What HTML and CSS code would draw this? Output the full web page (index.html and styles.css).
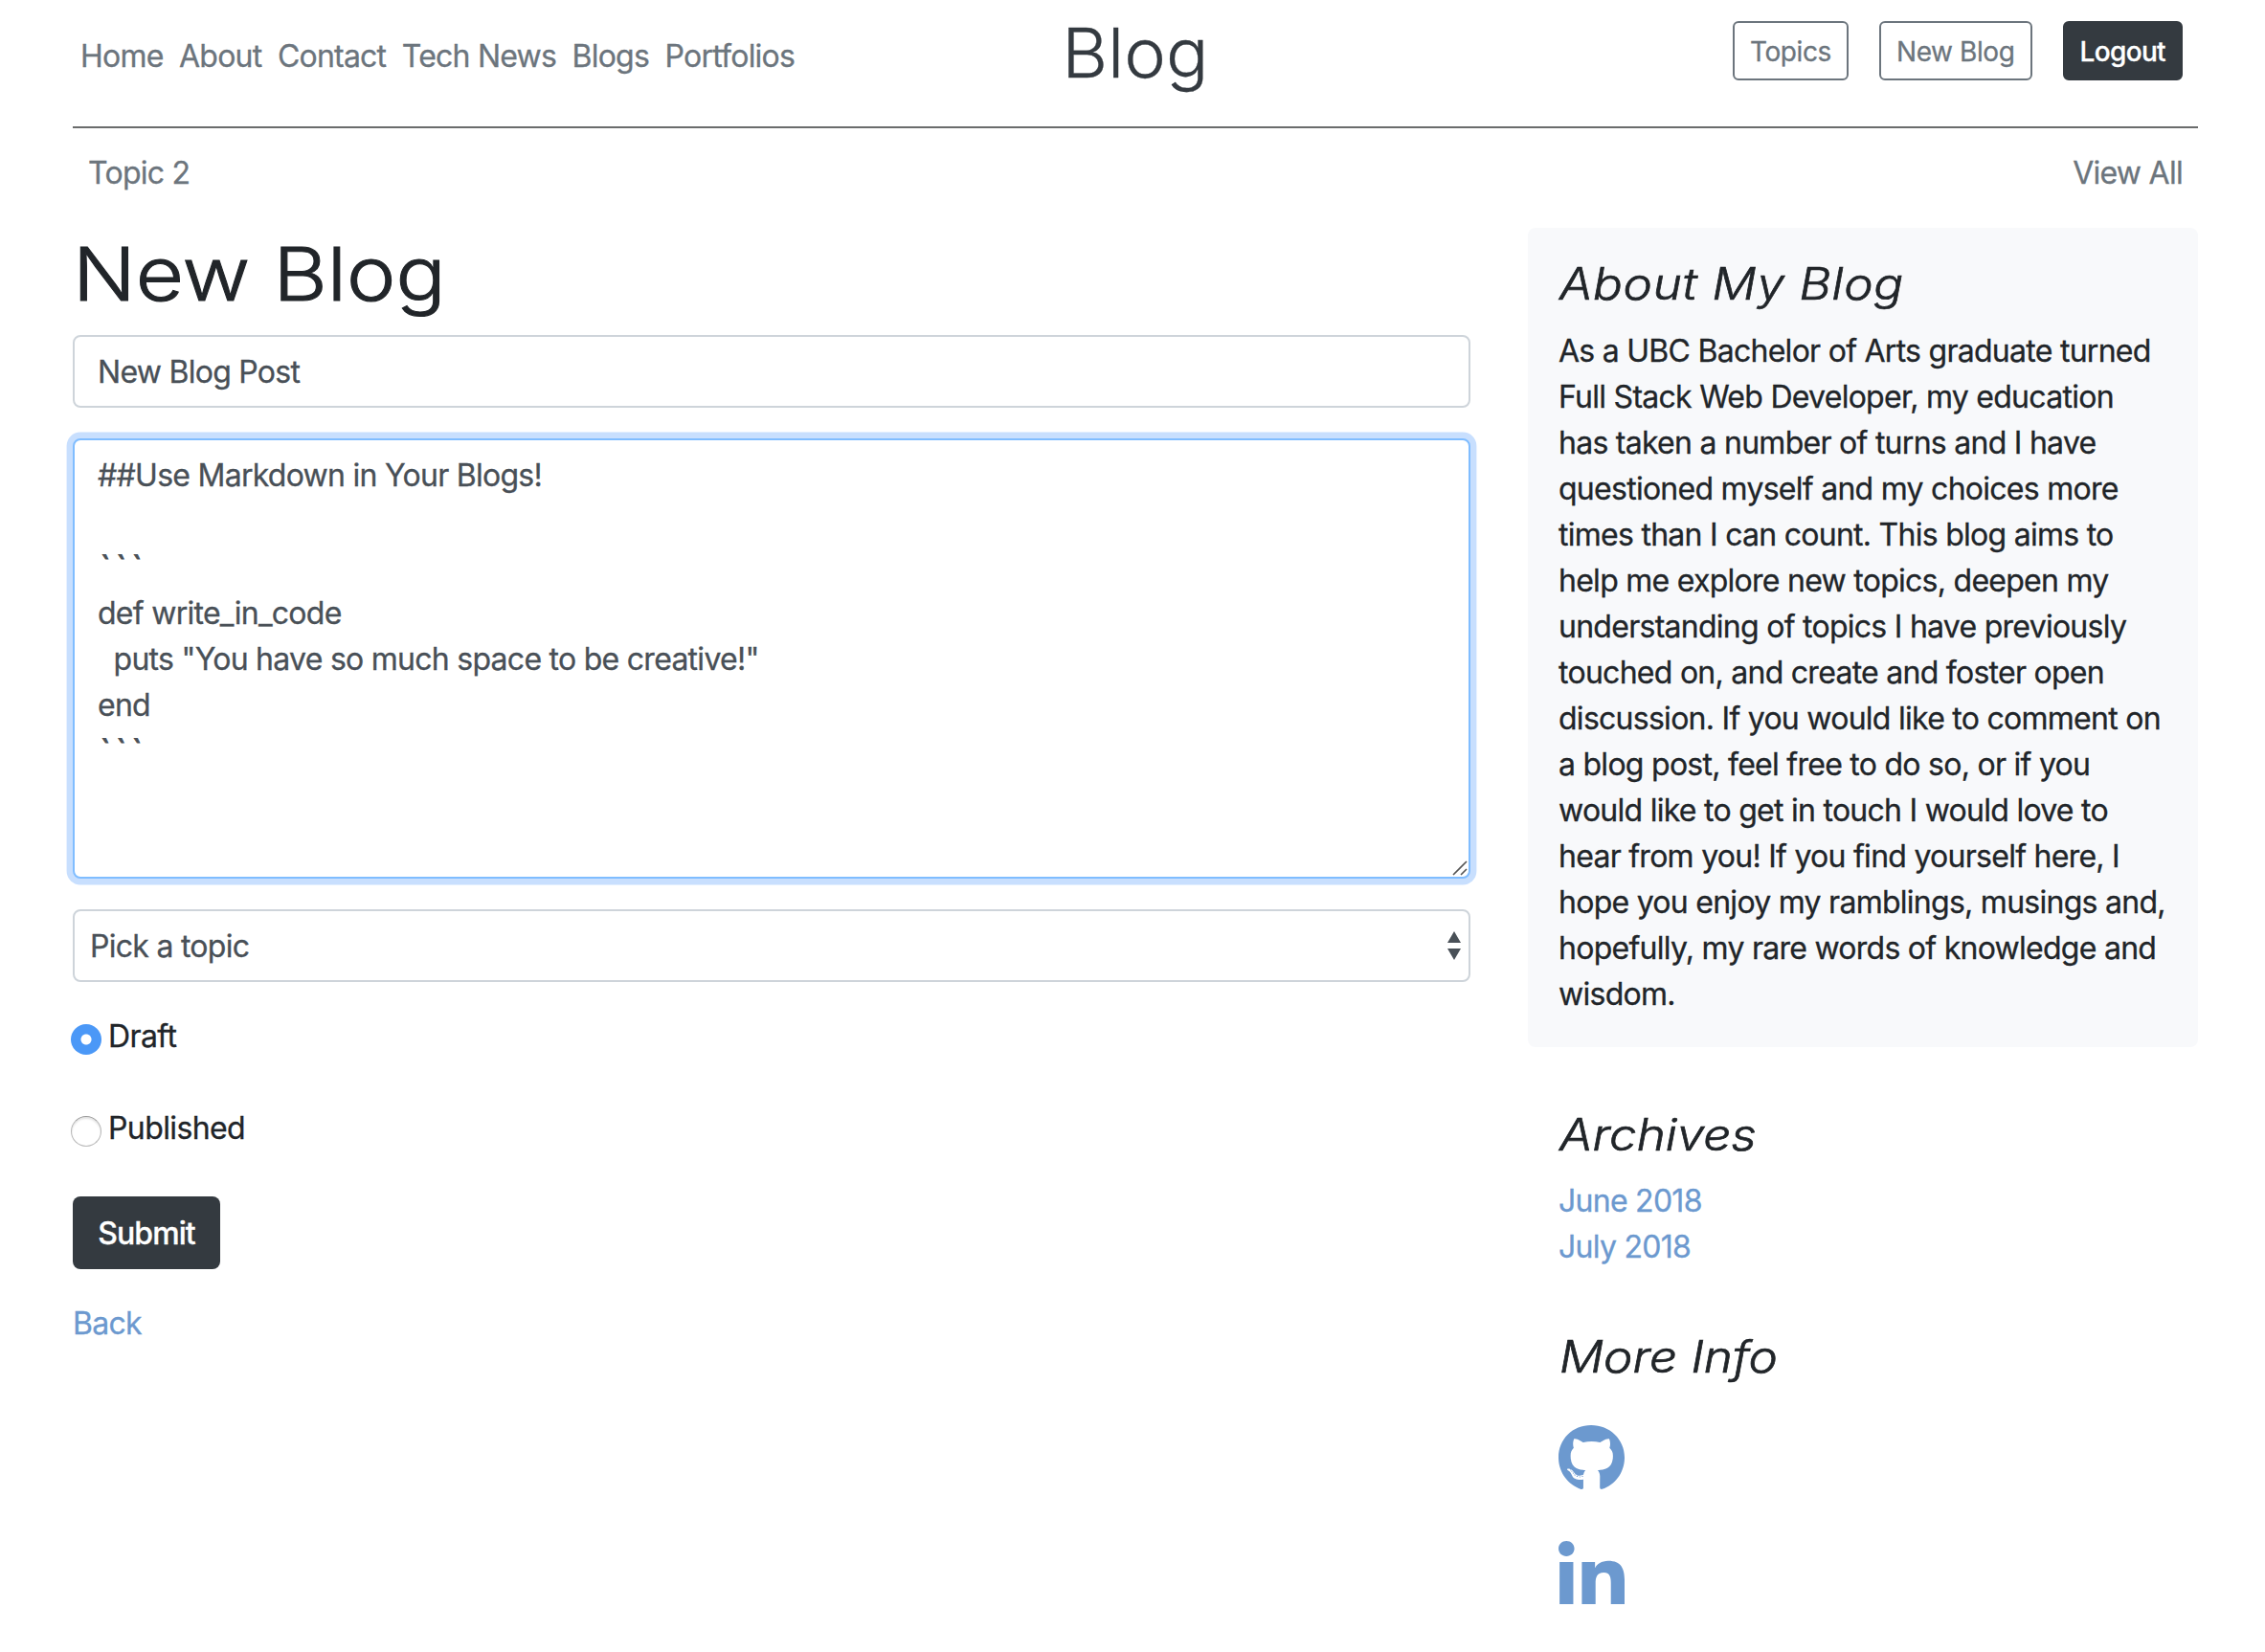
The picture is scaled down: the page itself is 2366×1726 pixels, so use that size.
FILE: index.html
```
<!DOCTYPE html>
<html lang="en">
<head>
<meta charset="utf-8">
<title>New Blog</title>
<link rel="stylesheet" href="styles.css">
</head>
<body>
<div class="container">
  <header class="header">
    <nav class="nav">
      <a href="#">Home</a>
      <a href="#">About</a>
      <a href="#">Contact</a>
      <a href="#">Tech News</a>
      <a href="#">Blogs</a>
      <a href="#">Portfolios</a>
    </nav>
    <a class="brand" href="#">Blog</a>
    <div class="actions">
      <a class="btn-sm" href="#">Topics</a>
      <a class="btn-sm" href="#">New Blog</a>
      <a class="btn-sm btn-sm-dark" href="#">Logout</a>
    </div>
  </header>

  <nav class="topics">
    <a href="#">Topic 2</a>
    <a href="#">View All</a>
  </nav>

  <div class="row">
    <main class="main">
      <h1 class="page-title">New Blog</h1>
      <form class="form">
        <input class="control" type="text" value="New Blog Post">
        <div class="field">
          <div class="control control-area is-focused" role="textbox" aria-multiline="true">##Use Markdown in Your Blogs!

<span class="fence">&#96;&#96;&#96;</span>
def write_in_code
  puts "You have so much space to be creative!"
end
<span class="fence">&#96;&#96;&#96;</span></div>
          <svg class="grip" viewBox="0 0 16 16"><path d="M1 15 15 1M9 15l6-6" fill="none" stroke="#555" stroke-width="1.6"/></svg>
        </div>
        <div class="field">
          <select class="control control-select"><option>Pick a topic</option></select>
          <svg class="caret" viewBox="0 0 14 30"><path d="M7 0l7 12H0zM7 30l7-12H0z" fill="#495057"/></svg>
        </div>
        <div class="radios">
          <label class="radio"><input type="radio" name="status" checked><span>Draft</span></label>
          <label class="radio"><input type="radio" name="status"><span>Published</span></label>
        </div>
        <button class="submit" type="button">Submit</button>
      </form>
      <a class="link" href="#">Back</a>
    </main>

    <aside class="sidebar">
      <section class="about">
        <h4 class="side-title side-title-about">About My Blog</h4>
        <p class="about-text">As a UBC Bachelor of Arts graduate turned<br>Full Stack Web Developer, my education<br>has taken a number of turns and I have<br>questioned myself and my choices more<br>times than I can count. This blog aims to<br>help me explore new topics, deepen my<br>understanding of topics I have previously<br>touched on, and create and foster open<br>discussion. If you would like to comment on<br>a blog post, feel free to do so, or if you<br>would like to get in touch I would love to<br>hear from you! If you find yourself here, I<br>hope you enjoy my ramblings, musings and,<br>hopefully, my rare words of knowledge and<br>wisdom.</p>
      </section>
      <section class="side-section">
        <h4 class="side-title">Archives</h4>
        <ul class="archive">
          <li><a class="link" href="#">June 2018</a></li>
          <li><a class="link" href="#">July 2018</a></li>
        </ul>
      </section>
      <section class="side-section side-section-info">
        <h4 class="side-title">More Info</h4>
        <div class="social">
          <a href="#" aria-label="GitHub"><svg class="github" viewBox="0 8 496 484" preserveAspectRatio="none"><path d="M165.900 397.400c0 2-2.300 3.600-5.200 3.600-3.300.3-5.600-1.300-5.600-3.600 0-2 2.300-3.600 5.200-3.600 3-.3 5.600 1.300 5.600 3.600zm-31.100-4.500c-.7 2 1.300 4.300 4.300 4.900 2.600 1 5.600 0 6.200-2s-1.300-4.300-4.300-5.200c-2.600-.7-5.500.3-6.200 2.300zm44.200-1.700c-2.900.7-4.900 2.600-4.600 4.900.3 2 2.900 3.300 5.900 2.600 2.900-.7 4.900-2.600 4.600-4.600-.3-1.900-3-3.200-5.900-2.900zM244.800 8C106.100 8 0 113.300 0 252c0 110.900 69.800 205.800 169.500 239.200 12.800 2.300 17.300-5.600 17.300-12.100 0-6.200-.3-40.400-.3-61.400 0 0-70 15-84.700-29.800 0 0-11.400-29.100-27.800-36.600 0 0-22.900-15.700 1.600-15.400 0 0 24.900 2 38.600 25.800 21.900 38.600 58.600 27.500 72.900 20.900 2.300-16 8.800-27.100 16-33.700-55.900-6.200-112.300-14.300-112.300-110.500 0-27.500 7.600-41.300 23.600-58.900-2.600-6.500-11.100-33.300 2.600-67.900 20.900-6.500 69 27 69 27 20-5.600 41.500-8.500 62.800-8.500s42.800 2.900 62.800 8.500c0 0 48.100-33.600 69-27 13.700 34.700 5.200 61.400 2.600 67.900 16 17.700 25.800 31.500 25.800 58.900 0 96.500-58.900 104.200-114.800 110.500 9.200 7.900 17 22.900 17 46.400 0 33.700-.3 75.400-.3 83.600 0 6.500 4.600 14.400 17.300 12.100C428.200 457.800 496 362.900 496 252 496 113.300 383.500 8 244.800 8zM97.200 352.900c-1.300 1-1 3.300.7 5.200 1.600 1.600 3.900 2.300 5.200 1 1.300-1 1-3.300-.7-5.200-1.600-1.600-3.900-2.300-5.200-1zm-10.800-8.100c-.7 1.300.3 2.900 2.300 3.900 1.600 1 3.600.7 4.300-.7.7-1.300-.3-2.900-2.300-3.900-2-.6-3.600-.3-4.300.7zm32.400 35.600c-1.600 1.300-1 4.300 1.300 6.200 2.300 2.300 5.200 2.600 6.500 1 1.300-1.300.7-4.300-1.300-6.200-2.200-2.300-5.200-2.600-6.500-1zm-11.400-14.700c-1.600 1-1.600 3.600 0 5.900 1.600 2.300 4.300 3.300 5.600 2.300 1.600-1.300 1.600-3.900 0-6.200-1.400-2.300-4-3.300-5.600-2z"/></svg></a>
          <a href="#" aria-label="LinkedIn"><svg class="linkedin" viewBox="0 32 448 448" preserveAspectRatio="none"><path d="M100.300 480H7.400V180.900h92.900V480zM53.800 140.100C24.100 140.100 0 115.500 0 85.800 0 56.100 24.100 32 53.800 32c29.700 0 53.800 24.100 53.800 53.800 0 29.700-24.100 54.300-53.800 54.300zM448 480h-92.700V334.400c0-34.700-.7-79.200-48.300-79.200-48.300 0-55.700 37.700-55.700 76.700V480h-92.800V180.900h89.100v40.800h1.300c12.400-23.500 42.700-48.300 87.900-48.300 94 0 111.300 61.900 111.300 142.300V480z"/></svg></a>
        </div>
      </section>
    </aside>
  </div>
</div>
</body>
</html>
```
FILE: styles.css
```
* {
  box-sizing: border-box;
}

body {
  margin: 0;
  background: #fff;
  color: #212529;
  font: 32px/48px Inter, "Liberation Sans", sans-serif;
  letter-spacing: -0.73px;
  -webkit-text-stroke: 0.3px;
}

a {
  color: inherit;
  text-decoration: none;
}

.container {
  width: 2220px;
  margin: 0 auto 0 76px;
}

/* Header */

.header {
  display: grid;
  grid-template-columns: 1fr auto 1fr;
  align-items: start;
  height: 134px;
  border-bottom: 2px solid #6a6c6c;
}

.nav {
  display: flex;
  gap: 16.5px;
  padding: 35px 0 0 8px;
  color: #6c757d;
  letter-spacing: -0.78px;
}

.brand {
  padding-top: 12px;
  color: #343a40;
  font-size: 71px;
  font-weight: 300;
  line-height: 86px;
  letter-spacing: 0;
  transform: scaleX(1.038);
}

.actions {
  display: flex;
  justify-content: flex-end;
  gap: 32px;
  padding: 22px 16px 0 0;
}

.btn-sm {
  height: 62px;
  padding: 9px 16px 7px;
  border: 2px solid #6c757d;
  border-radius: 6px;
  color: #6c757d;
  font-size: 28px;
  line-height: 42px;
  letter-spacing: -0.4px;
}

.btn-sm-dark {
  border-color: #343a40;
  background: #343a40;
  color: #fff;
  font-weight: 500;
  letter-spacing: -0.65px;
}

.topics {
  display: flex;
  justify-content: space-between;
  padding: 23px 16px 33px;
  color: #6c757d;
}

/* Columns */

.row {
  display: grid;
  grid-template-columns: 1460px 700px;
  gap: 60px;
  align-items: start;
}

.page-title {
  margin: 0 0 16px;
  font-size: 77px;
  font-weight: 300;
  line-height: 96px;
  letter-spacing: 0;
  transform: scaleX(1.126);
  transform-origin: left;
  -webkit-text-stroke: 1px;
}

/* Form */

.form {
  display: flex;
  flex-direction: column;
  align-items: stretch;
  gap: 32px;
  margin-bottom: 33px;
}

.field {
  position: relative;
  display: flex;
}

.control {
  display: block;
  width: 100%;
  height: 76px;
  margin: 0;
  padding: 12px 24px;
  border: 2px solid #ced4da;
  border-radius: 8px;
  outline: 0;
  background: #fff;
  color: #495057;
  font: inherit;
  letter-spacing: inherit;
}

.control-area {
  height: 460px;
  padding-top: 13px;
  white-space: pre-wrap;
}

.fence {
  padding-left: 3px;
  letter-spacing: 6.2px;
  -webkit-text-stroke: 1px;
}

.is-focused {
  border-color: #80bdff;
  box-shadow: 0 0 0 6.4px #c8dffe;
}

.control-select {
  padding: 13px 16px 11px;
  appearance: none;
}

.grip {
  position: absolute;
  right: 3px;
  bottom: 3px;
  width: 16px;
  height: 16px;
}

.caret {
  position: absolute;
  right: 10px;
  top: 23px;
  width: 14px;
  height: 30px;
}

.radios {
  display: flex;
  flex-direction: column;
  gap: 47px;
  margin-bottom: 16px;
}

.radio {
  display: flex;
  align-items: flex-start;
  gap: 7px;
  margin-left: -2px;
  letter-spacing: -0.6px;
}

.radio span {
  padding-top: 1px;
}

.radio input {
  width: 32px;
  height: 32px;
  margin: 12px 0 0;
  border: 1px solid #b8b8b8;
  border-top-color: #999;
  border-radius: 50%;
  appearance: none;
  background: #fff;
  box-shadow: inset 0 2px 2px #e4e4e4;
}

.radio input:checked {
  border: 0;
  background: radial-gradient(circle, #fff 5px, #4b98f7 6px);
  box-shadow: none;
}

.submit {
  align-self: flex-start;
  width: 154px;
  height: 76px;
  margin-top: -1px;
  padding: 2px 0 0;
  border: 0;
  border-radius: 8px;
  background: #343a40;
  color: #fff;
  font: inherit;
  font-weight: 500;
  letter-spacing: -0.9px;
}

.link {
  color: #6c99cf;
}

/* Sidebar */

.about {
  padding: 32px 32px 31px;
  border-radius: 8px;
  background: #f8f9fb;
}

.side-title {
  margin: 0 0 20px;
  font-size: 46.2px;
  font-style: italic;
  font-weight: 300;
  line-height: 52px;
  letter-spacing: 0;
  transform: translateX(1px) scaleX(1.108);
  transform-origin: left;
  -webkit-text-stroke: 0.7px;
}

.side-title-about {
  margin-bottom: 21px;
  letter-spacing: 0.6px;
}

.about-text {
  margin: 0;
  white-space: nowrap;
}

.side-section {
  padding: 65px 32px 0;
}

.side-section-info {
  padding-top: 64px;
}

.archive {
  margin: 0;
  padding: 0;
  list-style: none;
}

.social {
  display: flex;
  flex-direction: column;
  gap: 54px;
  padding-top: 26px;
}

.social a,
.social svg {
  display: block;
}

.social svg {
  width: 69px;
  fill: #6c99cf;
}

.github {
  height: 67px;
}

.linkedin {
  height: 66px;
}
```
